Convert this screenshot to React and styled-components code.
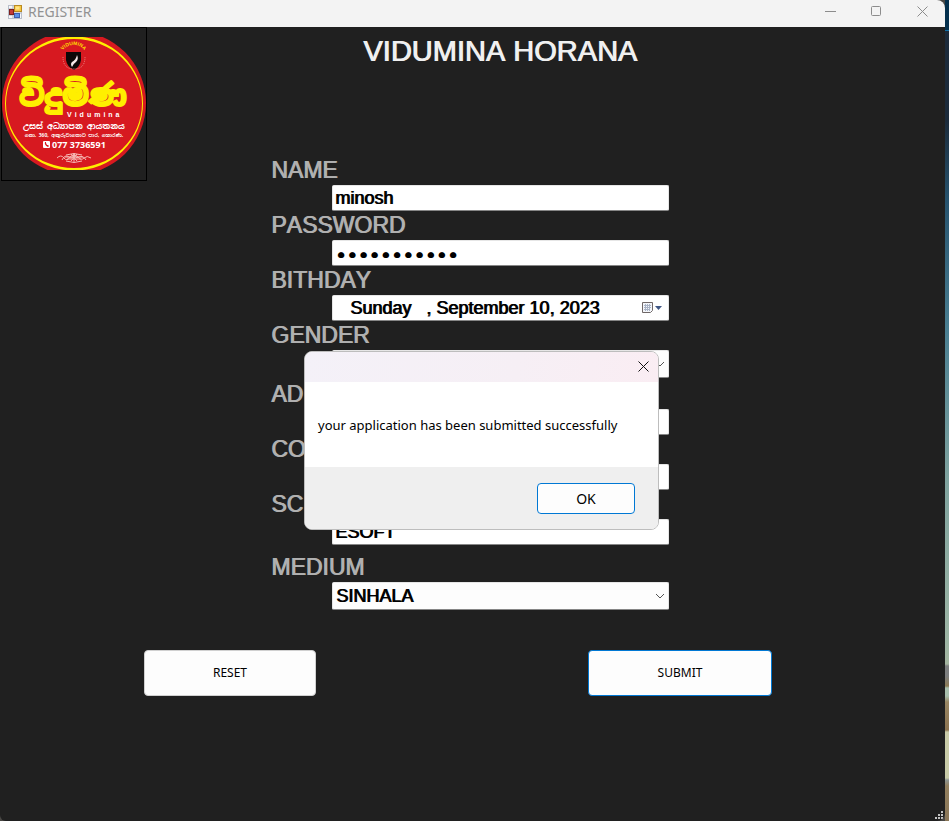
import React, { useState } from 'react';
import styled, { createGlobalStyle } from 'styled-components';

const GlobalStyle = createGlobalStyle`
  *, *::before, *::after { box-sizing: border-box; }
  body { margin: 0; background: #3a3d3c; }
  button, input, select { font: inherit; margin: 0; }
`;

const sans = `'Liberation Sans', Arial, sans-serif`;
const ui = `'Noto Sans', 'Open Sans', sans-serif`;

const Desktop = styled.div`
  display: flex;
  min-height: 100vh;
  background: #4a4845;
`;

const Wallpaper = styled.div`
  width: 4px;
  background: linear-gradient(
    #04304d 0 30px, #1272a8 30px 31px, #1c2b3b 31px 120px, #27536e 200px,
    #4a7f92 330px, #7fa39f 480px, #9db5a5 640px, #a4b5a0 664px, #7d7f80 666px 676px,
    #8d7b55 686px, #a9c0ae 688px 696px, #9a8764 702px, #8c7350 730px,
    #c9cba8 732px 778px, #8e9693 780px, #93805f 786px, #8a7658 821px
  );
`;

const AppWindow = styled.main`
  position: relative;
  flex: 1;
  min-width: 0;
  display: flex;
  flex-direction: column;
  background: #202020;
  border-radius: 0 8px 8px 6px;
  overflow: hidden;
  font-family: ${sans};
  font-kerning: none;
`;

const TitleBar = styled.header`
  display: flex;
  align-items: center;
  height: 27px;
  padding: 0 0 4px 7px;
  background: #f3f3f3;
  color: #929292;
  font-family: ${ui};
  font-size: 14px;
`;

const TitleText = styled.span`
  flex: 1;
  margin-left: 5px;
  line-height: 20px;
`;

const CaptionButton = styled.button`
  display: grid;
  place-items: center;
  width: 46px;
  height: 23px;
  padding: 0;
  border: 0;
  background: transparent;
  color: #8c8c8c;
`;

const Banner = styled.div`
  display: grid;
  grid-template-columns: 147px 1fr 93px;
  padding-left: 1px;
`;

const LogoFrame = styled.div`
  width: 146px;
  height: 154px;
  padding-top: 9px;
  border: 1px solid #000;
`;

const Heading = styled.h1`
  margin: 0;
  padding-top: 8px;
  text-align: center;
  color: #f0f0f0;
  font-size: 29px;
  font-weight: 400;
  line-height: 32px;
  text-shadow: 1px 0 0 #f0f0f0;
`;

const Form = styled.form`
  display: flex;
  flex-direction: column;
  flex: 1;
  margin-top: -25px;
`;

const FieldArea = styled.div`
  display: flex;
  justify-content: center;
  padding-right: 5px;
`;

const Fields = styled.div`
  position: relative;
  width: 398px;
`;

const Field = styled.div`
  display: grid;
  grid-template-columns: 61px 1fr;
  padding-top: ${(p) => p.$gap || 0}px;
`;

const Label = styled.label`
  grid-column: 1 / -1;
  height: 29px;
  line-height: 28px;
  color: #b0b0b0;
  font-size: 23px;
  text-shadow: 1px 0 0 #b0b0b0;
  white-space: nowrap;
`;

const Control = styled.div`
  position: relative;
  grid-column: 2;
  display: flex;
  align-items: center;
  color: #000;
  font-size: 18px;
`;

const controlLook = `
  width: 100%;
  border: 1px solid #e6e6e6;
  border-bottom-color: #868686;
  border-radius: 2px;
  background: #fff;
  color: #000;
  outline: 0;
  text-shadow: 1px 0 0 #000;
`;

const TextInput = styled.input`
  ${controlLook}
  height: 26px;
  padding: 0 2px;
  padding-left: ${(p) => p.$indent || 2}px;

  &[type='password'] {
    padding-top: 3px;
    font-family: 'DejaVu Sans', sans-serif;
    font-size: 19px;
  }
`;

const Select = styled.select`
  ${controlLook}
  height: 28px;
  padding: 0 24px 0 3px;
  appearance: none;
  background: #fdfdfd;
`;

const Adornment = styled.span`
  position: absolute;
  right: 4px;
  top: 0;
  bottom: 0;
  display: flex;
  align-items: center;
  pointer-events: none;
`;

const CalendarButton = styled.button`
  position: absolute;
  right: 6px;
  top: 5px;
  display: flex;
  padding: 0;
  border: 0;
  background: transparent;
`;

const Actions = styled.div`
  display: flex;
  justify-content: space-between;
  padding: 40px 173px 40px 144px;
`;

const PushButton = styled.button`
  width: ${(p) => p.$width}px;
  height: ${(p) => p.$height || 46}px;
  padding: 0 0 1px;
  border: 1px solid ${(p) => (p.$accent ? '#0078d4' : '#d0d0d0')};
  border-radius: 4px;
  background: #fdfdfd;
  color: #000;
  font-family: ${ui};
  font-size: ${(p) => p.$size || 12}px;
`;

const Dialog = styled.section`
  position: absolute;
  left: 33px;
  top: 195px;
  width: 355px;
  display: flex;
  flex-direction: column;
  border: 1px solid #bdbdbd;
  border-radius: 8px;
  overflow: hidden;
  background: #fff;
  color: #000;
  font-family: ${ui};
`;

const DialogBar = styled.div`
  display: flex;
  justify-content: flex-end;
  height: 30px;
  background: linear-gradient(100deg, #f4f1f8, #f6eff5 60%, #faedf3);
`;

const DialogClose = styled.button`
  display: grid;
  place-items: center;
  width: 30px;
  height: 28px;
  padding: 0;
  border: 0;
  background: transparent;
  color: #111;
`;

const DialogMessage = styled.p`
  margin: 0;
  height: 85px;
  padding: 0 13px;
  line-height: 86px;
  font-size: 13px;
  white-space: nowrap;
`;

const DialogFooter = styled.div`
  display: flex;
  justify-content: flex-end;
  padding: 16px 23px 15px;
  background: #efefef;
`;

const Grip = styled.svg`
  position: absolute;
  right: 2px;
  bottom: 2px;
`;

const sinhala = "'Noto Sans Sinhala', 'Noto Sans', sans-serif";

function AppIcon() {
  return (
    <svg width="16" height="16" viewBox="0 0 16 16" aria-hidden="true">
      <rect x="1.5" y="1.5" width="13" height="13" fill="#f7f7f9" stroke="#b9bfca" />
      <path d="M1 5h5M1 11h5M6 1v13M6 9h8" stroke="#a8b0bf" />
      <rect x="7.5" y="1.5" width="7" height="6" fill="#f8c83c" stroke="#b98a22" />
      <rect x="8.5" y="2.5" width="4" height="3" fill="#ffe487" />
      <rect x="2.5" y="5.5" width="4" height="5" fill="#c33a35" stroke="#7c201f" />
      <rect x="7.5" y="9.5" width="5" height="4" fill="#5c91e8" stroke="#3d62b0" />
    </svg>
  );
}

function Logo() {
  return (
    <svg width="144" height="133" viewBox="0 0 144 133" role="img" aria-label="Vidumina">
      <circle cx="72" cy="66" r="72" fill="#d71920" />
      <path
        fillRule="evenodd"
        fill="#ffef00"
        d="M3 66.500a69 67 0 1 0 138 0a69 67 0 1 0 -138 0zM4 66.500a68 64.500 0 1 0 136 0a68 64.500 0 1 0 -136 0z"
      />
      <path id="crestArc" d="M59 19a12.500 11 0 0 1 25 0" fill="none" />
      <text fill="#ffdf00" fontFamily="Liberation Sans" fontWeight="700" fontSize="5">
        <textPath href="#crestArc" startOffset="50%" textAnchor="middle">VIDUMINA</textPath>
      </text>
      <path d="M64 15h15v8q-1 7-7 10q-7-3-8-10z" fill="#0c0808" />
      <path d="M75 18q-1 5-5 7q-2 2 0 5q1-3 4-5q3-3 1-7" fill="#f5e9e9" />
      <path d="M61 20q0 12 11 12q11 0 11-12" fill="none" stroke="#e98a86" strokeDasharray="1 1" />
      <text x="71" y="69" textAnchor="middle" fill="#ffef00" stroke="#ffef00" strokeWidth="2" strokeLinejoin="round" fontFamily={sinhala} fontWeight="700" fontSize="30">විදුමිණ</text>
      <text x="65" y="80" fill="#fff" fontFamily="Liberation Sans" fontWeight="700" fontSize="7" letterSpacing="3">Vidumina</text>
      <text x="72" y="92" textAnchor="middle" fill="#fff" fontFamily={sinhala} fontWeight="700" fontSize="8">උසස් අධ්‍යාපන ආයතනය</text>
      <text x="72" y="100" textAnchor="middle" fill="#fff" fontFamily={sinhala} fontWeight="700" fontSize="5">නො. 360, අකුරුවාතොට පාර, හොරණ.</text>
      <rect x="41" y="104" width="7" height="7" rx="1" fill="#fff" />
      <path d="M43 105q-1 3 3 5l1-1-1-1h-1l-1-2v-1z" fill="#d71920" />
      <text x="50" y="111" fill="#fff" fontFamily="Open Sans" fontWeight="700" fontSize="9">077 3736591</text>
      <g fill="none" stroke="#f6b9b5" strokeWidth="1">
        <path d="M55 121q4-4 7 0t6-1q4-4 8 0q3 4 6 1t7 0M60 123q3-6 7-3t5-3q1 5 5 3t7 3M64 118q8-3 16 0M64 124q8 3 16 0M72 116v9M69 117l6 7M75 117l-6 7M63 120h18M65 122h14" />
      </g>
    </svg>
  );
}

function Chevron() {
  return (
    <svg width="10" height="6" viewBox="0 0 10 6" fill="none" stroke="#555" aria-hidden="true">
      <path d="M1 1l4 4 4-4" />
    </svg>
  );
}

function TextField({ id, label, gap, ...rest }) {
  return (
    <Field $gap={gap}>
      <Label htmlFor={id}>{label}</Label>
      <Control>
        <TextInput id={id} {...rest} />
      </Control>
    </Field>
  );
}

function SelectField({ id, label, gap, options }) {
  return (
    <Field $gap={gap}>
      <Label htmlFor={id}>{label}</Label>
      <Control>
        <Select id={id}>
          {options.map((o) => <option key={o}>{o}</option>)}
        </Select>
        <Adornment><Chevron /></Adornment>
      </Control>
    </Field>
  );
}

function MessageDialog({ onClose }) {
  return (
    <Dialog role="dialog" aria-label="Message">
      <DialogBar>
        <DialogClose type="button" aria-label="Close" onClick={onClose}>
          <svg width="11" height="11" viewBox="0 0 11 11" stroke="currentColor">
            <path d="M.5.5l10 10M10.5.5l-10 10" />
          </svg>
        </DialogClose>
      </DialogBar>
      <DialogMessage>your application has been submitted successfully</DialogMessage>
      <DialogFooter>
        <PushButton type="button" $width={98} $height={31} $size={14} $accent onClick={onClose}>OK</PushButton>
      </DialogFooter>
    </Dialog>
  );
}

export default function App() {
  const [open, setOpen] = useState(true);
  const submit = (e) => {
    e.preventDefault();
    setOpen(true);
  };
  return (
    <Desktop>
      <GlobalStyle />
      <AppWindow>
        <TitleBar>
          <AppIcon />
          <TitleText>REGISTER</TitleText>
          <CaptionButton aria-label="Minimize">
            <svg width="11" height="11" viewBox="0 0 11 11" stroke="currentColor"><path d="M0 5.5h11" /></svg>
          </CaptionButton>
          <CaptionButton aria-label="Maximize">
            <svg width="11" height="11" viewBox="0 0 11 11" fill="none" stroke="currentColor"><rect x=".5" y=".5" width="9" height="9" rx="1" /></svg>
          </CaptionButton>
          <CaptionButton aria-label="Close">
            <svg width="11" height="11" viewBox="0 0 11 11" stroke="currentColor"><path d="M.5.5l10 10M10.5.5l-10 10" /></svg>
          </CaptionButton>
        </TitleBar>
        <Banner>
          <LogoFrame><Logo /></LogoFrame>
          <Heading>VIDUMINA HORANA</Heading>
        </Banner>
        <Form onSubmit={submit} onReset={() => setOpen(false)}>
          <FieldArea>
            <Fields>
              <TextField id="name" label="NAME" defaultValue="minosh" />
              <TextField id="password" label="PASSWORD" type="password" defaultValue="minosh12345" />
              <Field>
                <Label htmlFor="birthday">BITHDAY</Label>
                <Control>
                  <TextInput id="birthday" $indent={17} defaultValue="Sunday   , September 10, 2023" />
                  <CalendarButton type="button" aria-label="Open calendar">
                    <svg width="22" height="15" viewBox="0 0 22 15">
                      <path d="M1.5 2.5h10v8l-2 2h-8z" fill="#f4f6fa" stroke="#6f6767" />
                      <path d="M3 5.5h7M3 7.5h7M3 9.5h6M4.5 4v7M6.5 4v7M8.5 4v7" stroke="#a9b3c6" />
                      <path d="M14 6h7l-3.5 4z" fill="#3f5684" />
                    </svg>
                  </CalendarButton>
                </Control>
              </Field>
              <SelectField id="gender" label="GENDER" options={['MALE', 'FEMALE']} />
              <TextField id="address" label="ADDRESS" gap={2} />
              <TextField id="contact" label="CONTACT" />
              <TextField id="school" label="SCHOOL" defaultValue="ESOFT" />
              <SelectField id="medium" label="MEDIUM" gap={8} options={['SINHALA', 'ENGLISH', 'TAMIL']} />
              {open && <MessageDialog onClose={() => setOpen(false)} />}
            </Fields>
          </FieldArea>
          <Actions>
            <PushButton type="reset" $width={172}>RESET</PushButton>
            <PushButton type="submit" $width={184} $accent>SUBMIT</PushButton>
          </Actions>
        </Form>
        <Grip width="8" height="8" viewBox="0 0 8 8" fill="#c4c4c4" aria-hidden="true">
          <path d="M6 0h2v2h-2zM3 3h2v2h-2zM6 3h2v2h-2zM0 6h2v2h-2zM3 6h2v2h-2zM6 6h2v2h-2z" />
        </Grip>
      </AppWindow>
      <Wallpaper />
    </Desktop>
  );
}
